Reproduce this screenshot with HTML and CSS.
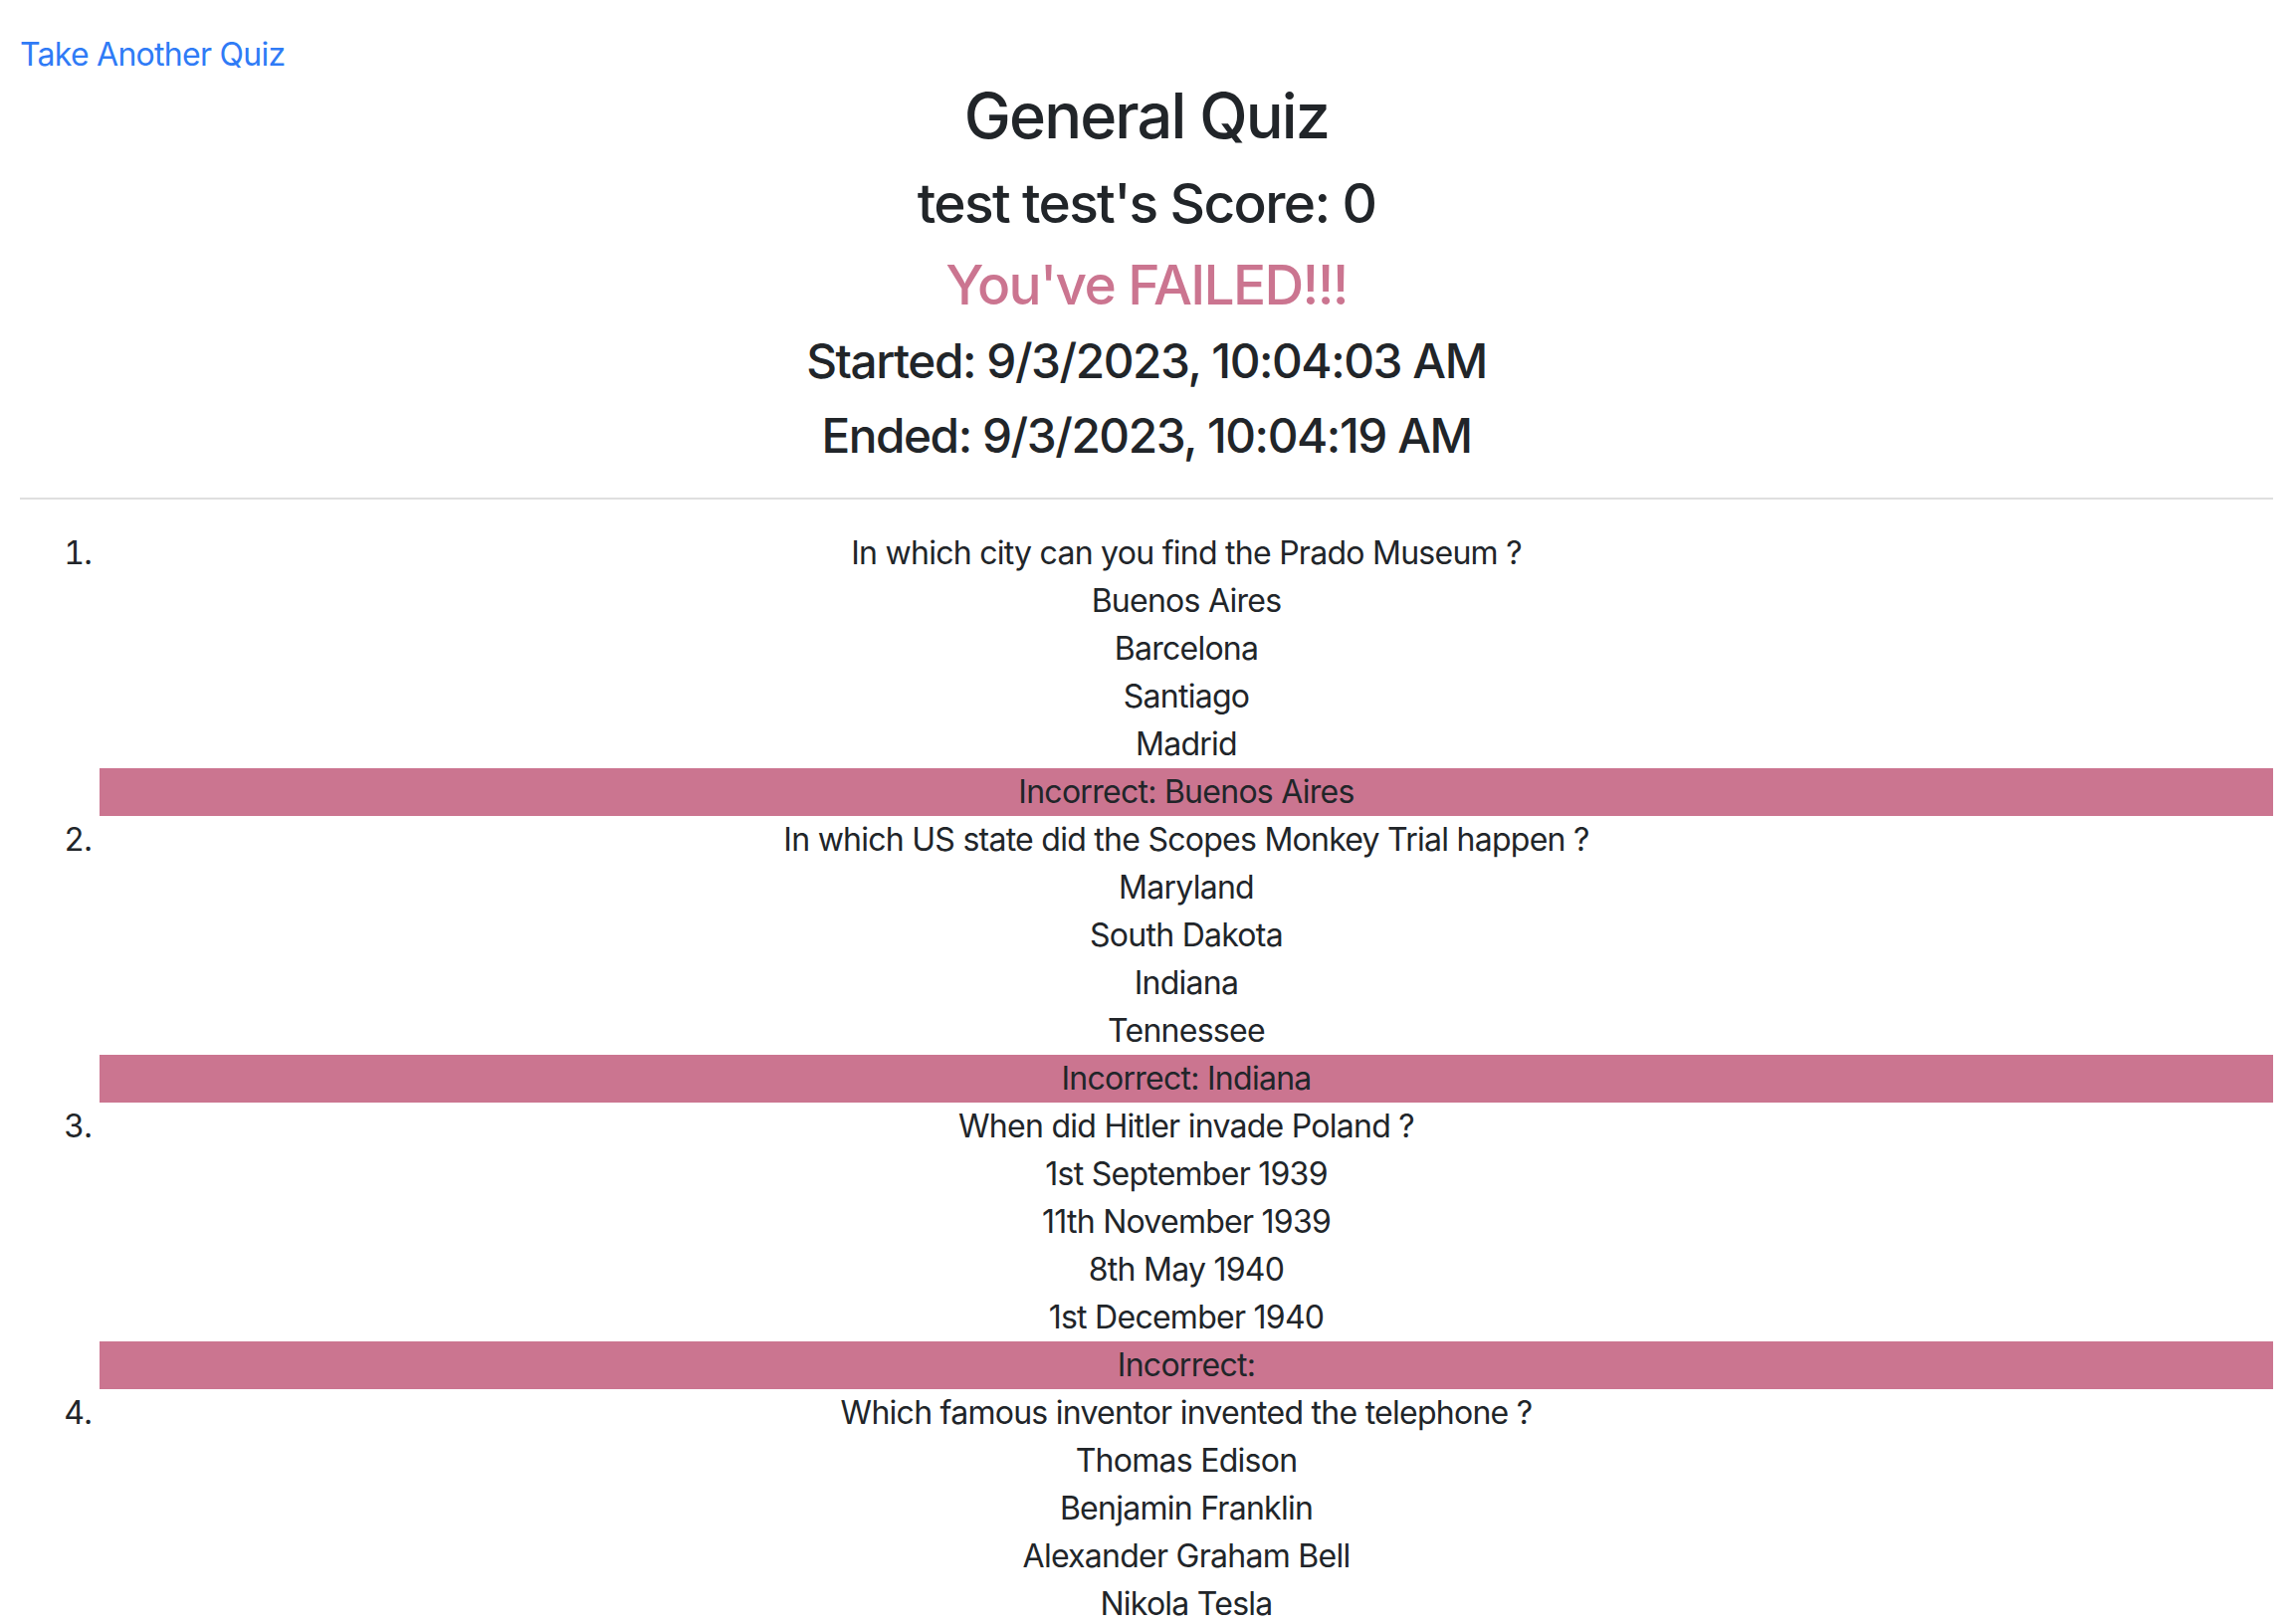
FILE: index.html
```html
<!DOCTYPE html>
<html lang="en">
<head>
<meta charset="utf-8">
<title>General Quiz - Results</title>
<link rel="stylesheet" href="styles.css">
</head>
<body>
<div class="page">
  <div class="nav"><a class="back-link" href="#">Take Another Quiz</a></div>
  <div class="summary">
    <h2 class="title">General Quiz</h2>
    <h3 class="score">test test's Score: 0</h3>
    <h3 class="score failed">You've FAILED!!!</h3>
    <h4 class="time">Started: 9/3/2023, 10:04:03 AM</h4>
    <h4 class="time">Ended: 9/3/2023, 10:04:19 AM</h4>
  </div>
  <hr class="divider">
  <ol class="questions">
    <li class="question">
      <div class="q-text">In which city can you find the Prado Museum ?</div>
      <div class="answer">Buenos Aires</div>
      <div class="answer">Barcelona</div>
      <div class="answer">Santiago</div>
      <div class="answer">Madrid</div>
      <div class="result incorrect">Incorrect: Buenos Aires</div>
    </li>
    <li class="question">
      <div class="q-text">In which US state did the Scopes Monkey Trial happen ?</div>
      <div class="answer">Maryland</div>
      <div class="answer">South Dakota</div>
      <div class="answer">Indiana</div>
      <div class="answer">Tennessee</div>
      <div class="result incorrect">Incorrect: Indiana</div>
    </li>
    <li class="question">
      <div class="q-text">When did Hitler invade Poland ?</div>
      <div class="answer">1st September 1939</div>
      <div class="answer">11th November 1939</div>
      <div class="answer">8th May 1940</div>
      <div class="answer">1st December 1940</div>
      <div class="result incorrect">Incorrect:</div>
    </li>
    <li class="question">
      <div class="q-text">Which famous inventor invented the telephone ?</div>
      <div class="answer">Thomas Edison</div>
      <div class="answer">Benjamin Franklin</div>
      <div class="answer">Alexander Graham Bell</div>
      <div class="answer">Nikola Tesla</div>
      <div class="result incorrect">Incorrect:</div>
    </li>
  </ol>
</div>
</body>
</html>
```

FILE: styles.css
```css
* {
  box-sizing: border-box;
}

html, body {
  margin: 0;
  padding: 0;
  background: #ffffff;
}

body {
  font-family: Inter, "Noto Sans", "Liberation Sans", sans-serif;
  font-size: 32px;
  line-height: 48px;
  letter-spacing: -0.023em;
  color: #212529;
}

.page {
  padding: 31px 20px 0 20px;
}

.nav {
  line-height: 48px;
}

.back-link {
  color: #2f7bf6;
  text-decoration: none;
}

.summary {
  text-align: center;
}

.summary h2,
.summary h3,
.summary h4 {
  margin: 0 0 16px 0;
  font-weight: 500;
  line-height: 1.2;
  letter-spacing: -0.03em;
}

.title {
  font-size: 63px;
}

.score {
  font-size: 55px;
}

.failed {
  color: #cb7590;
}

.time {
  font-size: 47.7px;
}

.summary .time + .time {
  margin-top: 18px;
}

.divider {
  margin: 33px 0 30px 0;
  border: 0;
  border-top: 2px solid #dfdfdf;
  height: 0;
}

.questions {
  margin: 0 0 32px 0;
  padding-left: 80px;
  list-style: decimal outside;
}

.question {
  text-align: center;
}

.q-text,
.answer,
.result {
  line-height: 48px;
}

.incorrect {
  background: #cb7590;
  color: #212529;
}
```
